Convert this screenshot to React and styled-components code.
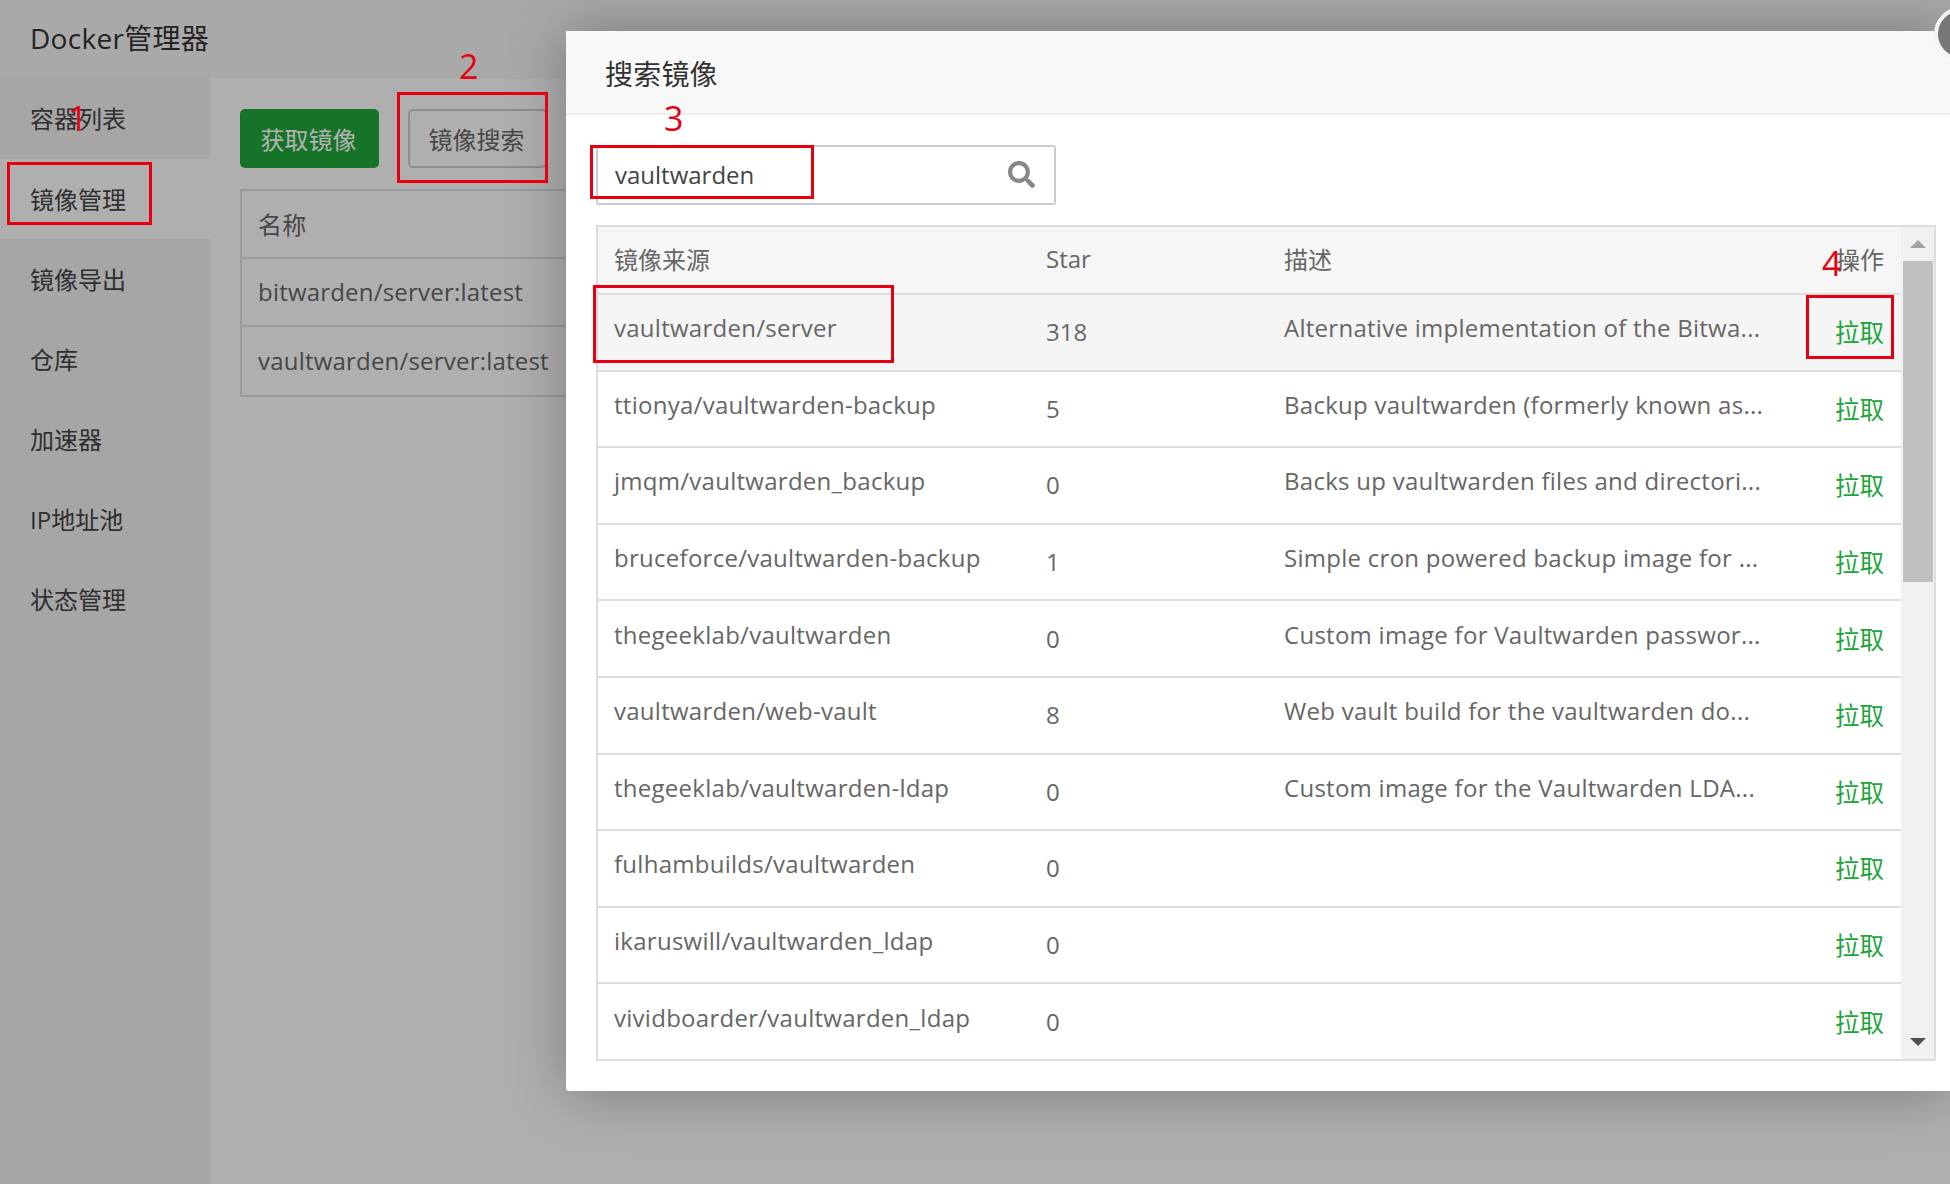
import React from 'react';
import styled, { createGlobalStyle } from 'styled-components';
import { FaSearch } from 'react-icons/fa';

const GlobalStyle = createGlobalStyle`
  html, body {
    margin: 0;
    padding: 0;
    background: #fff;
  }
  * {
    box-sizing: border-box;
  }
`;

const fontStack = `"Open Sans", "Noto Sans CJK SC", sans-serif`;

const Page = styled.div`
  position: relative;
  width: 1950px;
  height: 1184px;
  overflow: hidden;
  font-family: ${fontStack};
  font-size: 24px;
  color: #666;
`;

const TopBar = styled.div`
  height: 79px;
  padding: 0 30px 6px;
  display: flex;
  align-items: center;
  font-size: 28px;
  letter-spacing: 0.3px;
  color: #333;
  background: #f3f3f3;
`;

const Body = styled.div`
  display: flex;
  height: 1105px;
`;

const Sidebar = styled.div`
  width: 210px;
  margin-top: -2px;
  background: #eee;
`;

const SideItem = styled.div`
  height: 80px;
  padding: 0 0 2px 30px;
  display: flex;
  align-items: center;
  color: #444;
  background: ${p => (p.$active ? '#fbfbfb' : 'transparent')};

  &:first-child {
    height: 82px;
  }
`;

const Content = styled.div`
  flex: 1;
  padding: 30px 30px;
  background: #fbfbfb;
`;

const Actions = styled.div`
  display: flex;
  gap: 29px;
  margin-bottom: 21px;
`;

const Button = styled.div`
  width: 139px;
  height: 59px;
  padding-right: 2px;
  display: flex;
  align-items: center;
  justify-content: center;
  border-radius: 5px;
  border: 2px solid ${p => (p.$primary ? '#20a53a' : '#ccc')};
  background: ${p => (p.$primary ? '#20a53a' : '#fbfbfb')};
  color: ${p => (p.$primary ? '#fff' : '#666')};
`;

const BackTable = styled.div`
  width: 900px;
  border: 2px solid #ddd;
`;

const BackRow = styled.div`
  height: 68px;
  padding: 0 0 2px 16px;
  display: flex;
  align-items: center;
  letter-spacing: 0.2px;
  border-bottom: ${p => (p.$last ? 'none' : '2px solid #ddd')};
`;

const Overlay = styled.div`
  position: absolute;
  inset: 0;
  background: rgba(0, 0, 0, 0.3);
`;

const Modal = styled.div`
  position: absolute;
  left: 566px;
  top: 31px;
  width: 1384px;
  height: 1060px;
  background: #fff;
  border-radius: 3px 0 0 3px;
  box-shadow: 1px 1px 60px rgba(0, 0, 0, 0.3);
`;

const ModalTitle = styled.div`
  height: 84px;
  padding: 2px 0 0 39px;
  display: flex;
  align-items: center;
  font-size: 28px;
  letter-spacing: 0.2px;
  color: #333;
  background: #f8f8f8;
  border-bottom: 2px solid #eee;
`;

const ModalBody = styled.div`
  padding: 30px 15px 0 30px;
`;

const SearchBox = styled.div`
  width: 460px;
  height: 60px;
  padding: 0 19px 2px 17px;
  display: flex;
  align-items: center;
  justify-content: space-between;
  border: 2px solid #ccc;
  border-radius: 3px;
  color: #444;

  svg {
    margin-top: 1px;
  }
`;

const ListFrame = styled.div`
  display: flex;
  width: 1340px;
  height: 836px;
  margin-top: 20px;
  border: 2px solid #ddd;
`;

const List = styled.div`
  flex: 1;
  display: flex;
  flex-direction: column;
`;

const ListRow = styled.div`
  display: grid;
  grid-template-columns: 432px 238px 1fr 104px;
  flex: ${p => (p.$head ? '0 0 68px' : '1')};
  background: ${p => (p.$head ? '#f6f6f6' : p.$hover ? '#f5f5f5' : '#fff')};
  border-bottom: ${p => (p.$last ? 'none' : '2px solid #ddd')};
`;

const Cell = styled.div`
  display: flex;
  align-items: center;
  min-width: 0;
  padding-left: 16px;
  padding-bottom: ${p => (p.$raised ? '9px' : p.$head ? '3px' : '1px')};
  justify-content: ${p => (p.$right ? 'flex-end' : 'flex-start')};
  padding-right: ${p => (p.$right ? '17px' : '0')};
  letter-spacing: ${p => (p.$raised ? '0.27px' : '0')};
  white-space: nowrap;
`;

const Pull = styled.span`
  color: #20a53a;
  font-size: 24.5px;
`;

const ScrollTrack = styled.div`
  position: relative;
  width: 33px;
  background: #f0f0f0;
  display: flex;
  flex-direction: column;
  align-items: center;
`;

const ArrowSlot = styled.div`
  height: 34px;
  width: 100%;
  display: flex;
  align-items: center;
  justify-content: center;
`;

const Arrow = styled.div`
  width: 0;
  height: 0;
  border-left: 8px solid transparent;
  border-right: 8px solid transparent;
  border-${p => (p.$up ? 'bottom' : 'top')}: 8px solid ${p => (p.$up ? '#a3a3a3' : '#505050')};
`;

const ScrollThumb = styled.div`
  width: 30px;
  height: 321px;
  background: #c0c0c0;
`;

const ScrollGap = styled.div`
  flex: 1;
`;

const CloseButton = styled.div`
  position: absolute;
  left: 1934px;
  top: 7px;
  width: 54px;
  height: 54px;
  border-radius: 50%;
  background: #777;
  border: 4px solid #f4f4f4;
`;

const RedBox = styled.div`
  position: absolute;
  left: ${p => p.$x}px;
  top: ${p => p.$y}px;
  width: ${p => p.$w}px;
  height: ${p => p.$h}px;
  border: 3px solid #e60012;
`;

const RedNumber = styled.div`
  position: absolute;
  left: ${p => p.$x}px;
  top: ${p => p.$y}px;
  font-size: 34px;
  line-height: 34px;
  color: #e60012;
`;

const sideItems = ['容器列表', '镜像管理', '镜像导出', '仓库', '加速器', 'IP地址池', '状态管理'];

const rows = [
  ['vaultwarden/server', '318', 'Alternative implementation of the Bitwa...'],
  ['ttionya/vaultwarden-backup', '5', 'Backup vaultwarden (formerly known as...'],
  ['jmqm/vaultwarden_backup', '0', 'Backs up vaultwarden files and directori...'],
  ['bruceforce/vaultwarden-backup', '1', 'Simple cron powered backup image for ...'],
  ['thegeeklab/vaultwarden', '0', 'Custom image for Vaultwarden passwor...'],
  ['vaultwarden/web-vault', '8', 'Web vault build for the vaultwarden do...'],
  ['thegeeklab/vaultwarden-ldap', '0', 'Custom image for the Vaultwarden LDA...'],
  ['fulhambuilds/vaultwarden', '0', ''],
  ['ikaruswill/vaultwarden_ldap', '0', ''],
  ['vividboarder/vaultwarden_ldap', '0', ''],
];

const boxes = [
  { x: 7, y: 162, w: 145, h: 63 },
  { x: 397, y: 92, w: 151, h: 91 },
  { x: 590, y: 145, w: 224, h: 54 },
  { x: 593, y: 285, w: 301, h: 78 },
  { x: 1806, y: 295, w: 88, h: 64 },
];

const numbers = [
  { x: 68, y: 101, t: '1' },
  { x: 459, y: 49, t: '2' },
  { x: 664, y: 101, t: '3' },
  { x: 1822, y: 246, t: '4' },
];

function App() {
  return (
    <Page>
      <GlobalStyle />
      <TopBar>Docker管理器</TopBar>
      <Body>
        <Sidebar>
          {sideItems.map((item, i) => (
            <SideItem key={item} $active={i === 1}>{item}</SideItem>
          ))}
        </Sidebar>
        <Content>
          <Actions>
            <Button $primary>获取镜像</Button>
            <Button>镜像搜索</Button>
          </Actions>
          <BackTable>
            <BackRow $head>名称</BackRow>
            <BackRow>bitwarden/server:latest</BackRow>
            <BackRow $last>vaultwarden/server:latest</BackRow>
          </BackTable>
        </Content>
      </Body>
      <Overlay />
      <Modal>
        <ModalTitle>搜索镜像</ModalTitle>
        <ModalBody>
          <SearchBox>
            vaultwarden
            <FaSearch size={27} color="#888" />
          </SearchBox>
          <ListFrame>
            <List>
              <ListRow $head>
                <Cell $head>镜像来源</Cell>
                <Cell $head>Star</Cell>
                <Cell $head>描述</Cell>
                <Cell $head $right>操作</Cell>
              </ListRow>
              {rows.map((row, i) => (
                <ListRow key={row[0]} $hover={i === 0} $last={i === rows.length - 1}>
                  <Cell $raised>{row[0]}</Cell>
                  <Cell>{row[1]}</Cell>
                  <Cell $raised>{row[2]}</Cell>
                  <Cell $right><Pull>拉取</Pull></Cell>
                </ListRow>
              ))}
            </List>
            <ScrollTrack>
              <ArrowSlot><Arrow $up /></ArrowSlot>
              <ScrollThumb />
              <ScrollGap />
              <ArrowSlot><Arrow /></ArrowSlot>
            </ScrollTrack>
          </ListFrame>
        </ModalBody>
      </Modal>
      <CloseButton />
      {boxes.map(b => (
        <RedBox key={b.x} $x={b.x} $y={b.y} $w={b.w} $h={b.h} />
      ))}
      {numbers.map(n => (
        <RedNumber key={n.t} $x={n.x} $y={n.y}>{n.t}</RedNumber>
      ))}
    </Page>
  );
}

export default App;
